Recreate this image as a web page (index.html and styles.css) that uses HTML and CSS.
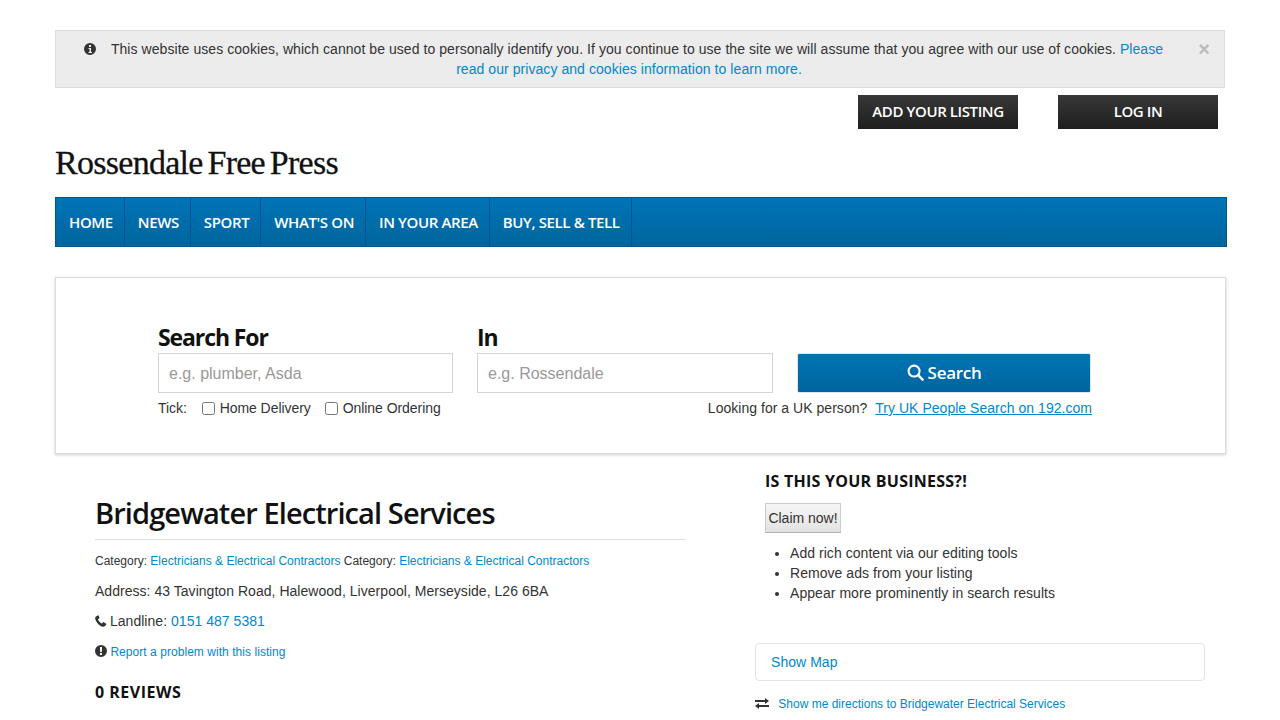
FILE: index.html
```html
<!DOCTYPE html>
<html lang="en">
<head>
    <meta charset="UTF-8">
    <meta name="viewport" content="width=device-width, initial-scale=1.0">
    <title>Bridgewater Electrical Services - Rossendale Free Press</title>
    <link rel="stylesheet" href="styles.css">
</head>
<body>
    <div class="page">
        <div class="cookie-alert">
            <svg class="cookie-icon" viewBox="0 0 12 12" width="12" height="12"><path fill="#333" fill-rule="evenodd" d="M6 0a6 6 0 1 0 0 12A6 6 0 0 0 6 0zM5 2h2v2H5zM4.500 5H7v4h1v1H4.500V9h1V6h-1z"/></svg>
            <p>This website uses cookies, which cannot be used to personally identify you. If you continue to use the site we will assume that you agree with our use of cookies. <a href="#">Please</a> <a href="#">read our privacy and cookies information to learn more.</a></p>
            <span class="cookie-close">×</span>
        </div>

        <div class="top-buttons">
            <a href="#" class="dark-button">ADD YOUR LISTING</a>
            <a href="#" class="dark-button">LOG IN</a>
        </div>

        <div class="logo">Rossendale Free Press</div>

        <nav class="main-nav">
            <a href="#">HOME</a>
            <a href="#">NEWS</a>
            <a href="#">SPORT</a>
            <a href="#">WHAT'S ON</a>
            <a href="#">IN YOUR AREA</a>
            <a href="#">BUY, SELL &amp; TELL</a>
        </nav>

        <form class="search-box">
            <div class="search-row">
                <label class="search-field search-what">
                    <span>Search For</span>
                    <input type="text" placeholder="e.g. plumber, Asda">
                </label>
                <label class="search-field search-where">
                    <span>In</span>
                    <input type="text" placeholder="e.g. Rossendale">
                </label>
                <button type="button" class="search-button">
                    <svg viewBox="0 0 18 18" width="17" height="17"><circle cx="7.500" cy="7.500" r="5.800" fill="none" stroke="#fff" stroke-width="2.200"/><path d="M11.800 11.800L16.500 16.500" stroke="#fff" stroke-width="2.600" stroke-linecap="round"/></svg>
                    Search
                </button>
            </div>
            <div class="search-options">
                <div class="ticks">
                    <span class="tick-label">Tick:</span>
                    <label><input type="checkbox"> Home Delivery</label>
                    <label><input type="checkbox"> Online Ordering</label>
                </div>
                <div class="people-search">Looking for a UK person? <a href="#">Try UK People Search on 192.com</a></div>
            </div>
        </form>

        <div class="content">
            <div class="listing">
                <h1>Bridgewater Electrical Services</h1>
                <p class="category">Category: <a href="#">Electricians &amp; Electrical Contractors</a> Category: <a href="#">Electricians &amp; Electrical Contractors</a></p>
                <p class="detail">Address: 43 Tavington Road, Halewood, Liverpool, Merseyside, L26 6BA</p>
                <p class="detail">
                    <svg class="phone-icon" viewBox="0 0 12 12" width="12" height="12"><path fill="#333" d="M2.800.4L1 1.500C.3 2 0 2.800.2 3.700c.5 2 1.500 3.800 3 5.200 1.300 1.300 2.800 2.300 4.700 2.900.8.200 1.700 0 2.200-.7l1.200-1.600c.2-.3.200-.6-.1-.8L8.900 7.200c-.3-.2-.6-.1-.8.100l-.9 1c-.2.200-.4.200-.6.100-1.500-.8-2.800-2-3.500-3.600-.1-.2-.1-.4.100-.6l1-.9c.2-.2.300-.5.200-.8L3.500.6C3.300.3 3 .3 2.800.4z"/></svg>
                    Landline: <a href="#">0151 487 5381</a>
                </p>
                <p class="report">
                    <svg viewBox="0 0 12 12" width="12" height="12"><path fill="#333" fill-rule="evenodd" d="M6 0a6 6 0 1 0 0 12A6 6 0 0 0 6 0zM4.900 2h2.200l-.3 5H5.200zM5 8h2v2H5z"/></svg>
                    <a href="#">Report a problem with this listing</a>
                </p>
                <h2>0 REVIEWS</h2>
            </div>

            <aside class="sidebar">
                <div class="claim">
                    <h3>IS THIS YOUR BUSINESS?!</h3>
                    <button type="button" class="claim-button">Claim now!</button>
                    <ul>
                        <li>Add rich content via our editing tools</li>
                        <li>Remove ads from your listing</li>
                        <li>Appear more prominently in search results</li>
                    </ul>
                </div>
                <a href="#" class="map-panel">Show Map</a>
                <p class="directions">
                    <svg viewBox="0 0 14 11" width="14" height="11"><path fill="#333" d="M0 2h10V0l4 3-4 3V4H0zM14 7H4V5L0 8l4 3V9h10z"/></svg>
                    <a href="#">Show me directions to Bridgewater Electrical Services</a>
                </p>
            </aside>
        </div>
    </div>
</body>
</html>
```

FILE: styles.css
```css
body {
    font-family: 'Liberation Sans', Arial, sans-serif;
    font-size: 14px;
    letter-spacing: 0.05px;
    color: #333;
    background: #fff;
    margin: 0;
}
a {
    color: #0088cc;
    text-decoration: none;
}
.page {
    width: 1172px;
    margin-left: 55px;
    padding-top: 30px;
}

/* cookie bar */
.cookie-alert {
    display: flex;
    align-items: flex-start;
    box-sizing: border-box;
    width: 1170px;
    height: 58px;
    padding: 8px 14px 8px 28px;
    background: #ececec;
    border: 1px solid #dcdcdc;
}
.cookie-icon {
    flex: none;
    margin-top: 4px;
}
.cookie-alert p {
    flex: none;
    width: 1070px;
    margin: 0 0 0 -2px;
    line-height: 20px;
    letter-spacing: 0.06px;
    text-align: center;
    text-indent: 16px;
}
.cookie-close {
    flex: none;
    margin-left: auto;
    font-size: 20px;
    font-weight: bold;
    line-height: 20px;
    color: #bbb;
}

/* top buttons */
.top-buttons {
    display: flex;
    justify-content: flex-end;
    gap: 40px;
    padding: 7px 9px 0 0;
}
.dark-button {
    display: block;
    box-sizing: border-box;
    width: 160px;
    height: 34px;
    font-family: 'Open Sans', sans-serif;
    font-size: 15px;
    font-weight: 600;
    line-height: 33px;
    letter-spacing: -0.4px;
    text-align: center;
    color: #fff;
    background: linear-gradient(#383838, #1e1e1e);
}

.logo {
    margin-top: 17px;
    height: 36px;
    font-family: 'Liberation Serif', serif;
    font-size: 34px;
    line-height: 33px;
    letter-spacing: -0.72px;
    word-spacing: -3px;
    -webkit-text-stroke: 0.3px #111;
    color: #111;
}

/* nav */
.main-nav {
    display: flex;
    box-sizing: border-box;
    height: 50px;
    margin-top: 15px;
    background: linear-gradient(#0074b6, #00659d);
    border: 1px solid #00588c;
}
.main-nav a {
    padding: 0 11px 0 13px;
    border-right: 1px solid #0a4f94;
    font-family: 'Open Sans', sans-serif;
    font-size: 15px;
    font-weight: 600;
    line-height: 48px;
    letter-spacing: -0.38px;
    color: #fff;
}

/* search */
.search-box {
    box-sizing: border-box;
    width: 1171px;
    height: 177px;
    margin-top: 30px;
    padding: 43px 133px 0 102px;
    border: 1px solid #dedede;
    box-shadow: 0 1px 3px rgba(0,0,0,0.2);
}
.search-row {
    display: flex;
    align-items: flex-end;
}
.search-field {
    display: block;
    margin-right: 24px;
}
.search-field span {
    display: block;
    font-family: 'Open Sans', sans-serif;
    font-size: 23px;
    font-weight: 700;
    line-height: 32px;
    letter-spacing: -1.1px;
    color: #111;
}
.search-field input {
    display: block;
    box-sizing: border-box;
    width: 295px;
    height: 40px;
    padding: 2px 10px 0;
    border: 1px solid #d4d4d4;
    font-family: 'Liberation Sans', Arial, sans-serif;
    font-size: 16px;
    outline: none;
}
.search-where {
    margin-right: 24px;
}
.search-where input {
    width: 296px;
}
.search-field input::placeholder {
    color: #999;
}
.search-button {
    display: flex;
    align-items: center;
    justify-content: center;
    gap: 4px;
    width: 294px;
    height: 40px;
    padding: 0 0 2px;
    border: 1px solid #dce6ec;
    border-radius: 2px;
    background: linear-gradient(#0074b6, #00659d);
    font-family: 'Open Sans', sans-serif;
    font-size: 17px;
    font-weight: 600;
    letter-spacing: -0.3px;
    color: #fff;
}
.search-options {
    display: flex;
    justify-content: space-between;
    margin-top: 5px;
    line-height: 20px;
}
.ticks {
    display: flex;
    gap: 14px;
    letter-spacing: -0.05px;
}
.tick-label {
    margin-right: 1px;
}
.ticks input {
    width: 13px;
    height: 13px;
    margin: 0 1px 0 0;
    vertical-align: -2px;
}
.people-search {
    letter-spacing: 0.03px;
}
.people-search a {
    margin-left: 4px;
    text-decoration: underline;
}

/* listing */
.content {
    display: flex;
    padding-top: 16px;
}
.listing {
    width: 590px;
    margin-left: 40px;
    margin-right: 70px;
    padding-top: 25px;
}
.listing h1 {
    margin: 0;
    padding-bottom: 8px;
    border-bottom: 1px solid #ddd;
    font-family: 'Open Sans', sans-serif;
    font-size: 29px;
    font-weight: 600;
    line-height: 36px;
    letter-spacing: -0.9px;
    color: #111;
}
.category {
    margin: 13px 0 0;
    font-size: 12px;
    line-height: 16px;
    letter-spacing: 0;
}
.detail {
    margin: 12px 0 0;
    line-height: 18px;
    letter-spacing: 0.035px;
}
.category + .detail {
    margin-top: 13px;
}
.phone-icon {
    margin-right: -1px;
}
.report {
    margin: 13px 0 0;
    font-size: 12px;
    line-height: 18px;
}
.listing svg {
    vertical-align: -1px;
}
.listing h2 {
    margin: 20px 0 0;
    font-family: 'Open Sans', sans-serif;
    font-size: 16px;
    font-weight: 700;
    line-height: 22px;
    letter-spacing: 0.5px;
    color: #111;
}

/* sidebar */
.sidebar {
    width: 450px;
}
.claim {
    padding-left: 10px;
}
.claim h3 {
    margin: 0;
    font-family: 'Open Sans', sans-serif;
    font-size: 16px;
    font-weight: 700;
    line-height: 22px;
    letter-spacing: 0.25px;
    color: #111;
}
.claim-button {
    display: block;
    box-sizing: border-box;
    width: 76px;
    height: 30px;
    margin-top: 11px;
    padding: 0;
    border: 1px solid #ccc;
    border-bottom-color: #b0b0b0;
    background: linear-gradient(#f6f6f6, #e2e2e2);
    font-family: 'Liberation Sans', Arial, sans-serif;
    font-size: 14px;
    color: #333;
}
.claim ul {
    margin: 10px 0 0;
    padding-left: 25px;
    line-height: 20px;
}
.map-panel {
    display: block;
    box-sizing: border-box;
    height: 38px;
    margin-top: 40px;
    padding-left: 15px;
    border: 1px solid #e3e3e3;
    border-radius: 4px;
    line-height: 36px;
}
.directions {
    margin: 14px 0 0;
    font-size: 12px;
    line-height: 18px;
    letter-spacing: 0;
}
.directions svg {
    margin-right: 6px;
    vertical-align: -1px;
}
```
